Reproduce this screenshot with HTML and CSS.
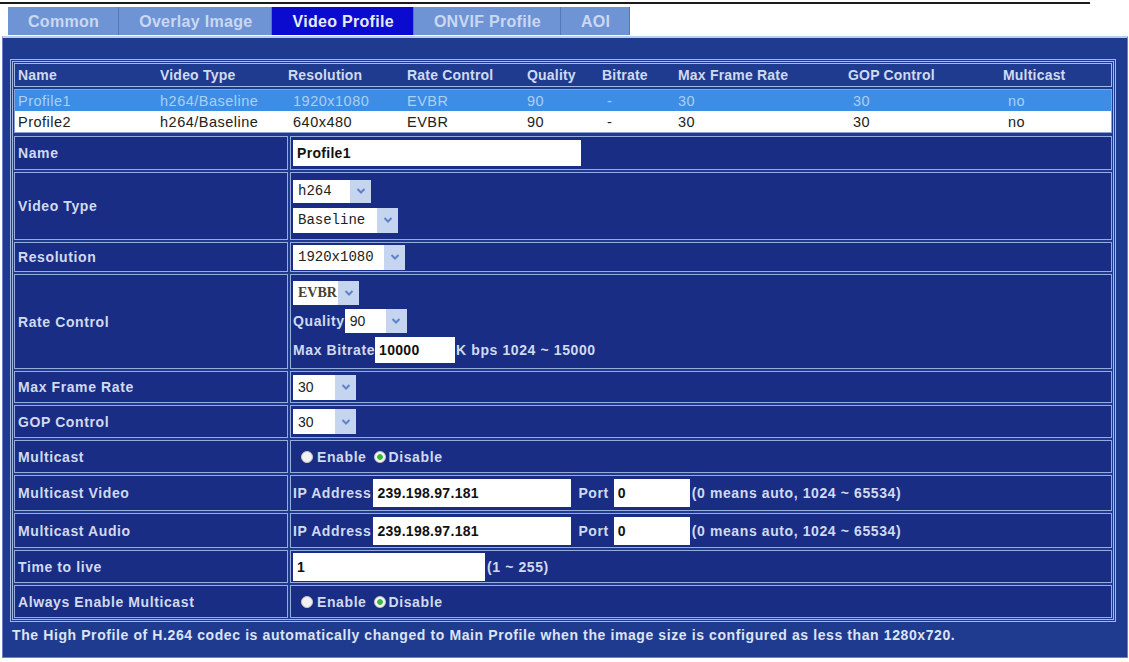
FILE: index.html
```html
<!DOCTYPE html>
<html lang="en">
<head>
<meta charset="utf-8">
<title>Video Profile</title>
<link rel="stylesheet" href="styles.css">
</head>
<body>
<div class="topline"></div>
<nav class="tabs">
  <a class="tab">Common</a>
  <a class="tab">Overlay Image</a>
  <a class="tab active">Video Profile</a>
  <a class="tab">ONVIF Profile</a>
  <a class="tab">AOI</a>
</nav>

<main class="panel">
  <div class="frame">
    <div class="head cols">
      <span>Name</span><span>Video Type</span><span>Resolution</span><span>Rate Control</span><span>Quality</span><span>Bitrate</span><span>Max Frame Rate</span><span>GOP Control</span><span>Multicast</span>
    </div>
    <div class="list">
      <div class="cols item selected">
        <span>Profile1</span><span>h264/Baseline</span><span class="d">1920x1080</span><span>EVBR</span><span>90</span><span class="d">-</span><span>30</span><span class="d">30</span><span class="d">no</span>
      </div>
      <div class="cols item">
        <span>Profile2</span><span>h264/Baseline</span><span class="d">640x480</span><span>EVBR</span><span>90</span><span class="d">-</span><span>30</span><span class="d">30</span><span class="d">no</span>
      </div>
    </div>

    <div class="form">
      <div class="label">Name</div>
      <div class="value"><input class="field f-name" type="text" value="Profile1"></div>

      <div class="label">Video Type</div>
      <div class="value stack">
        <span class="select s-h264"><span class="opt mono">h264</span><span class="drop"><svg viewBox="0 0 10 6"><path d="M1.5 1 L5 4.5 L8.5 1"/></svg></span></span>
        <span class="select s-base"><span class="opt mono">Baseline</span><span class="drop"><svg viewBox="0 0 10 6"><path d="M1.5 1 L5 4.5 L8.5 1"/></svg></span></span>
      </div>

      <div class="label">Resolution</div>
      <div class="value"><span class="select s-res"><span class="opt mono">1920x1080</span><span class="drop"><svg viewBox="0 0 10 6"><path d="M1.5 1 L5 4.5 L8.5 1"/></svg></span></span></div>

      <div class="label">Rate Control</div>
      <div class="value stack rate">
        <span class="select s-evbr"><span class="opt serif">EVBR</span><span class="drop"><svg viewBox="0 0 10 6"><path d="M1.5 1 L5 4.5 L8.5 1"/></svg></span></span>
        <span class="line">Quality<span class="select s-qual"><span class="opt">90</span><span class="drop"><svg viewBox="0 0 10 6"><path d="M1.5 1 L5 4.5 L8.5 1"/></svg></span></span></span>
        <span class="line">Max Bitrate<input class="field f-rate" type="text" value="10000">K bps 1024 ~ 15000</span>
      </div>

      <div class="label">Max Frame Rate</div>
      <div class="value"><span class="select s-num"><span class="opt">30</span><span class="drop"><svg viewBox="0 0 10 6"><path d="M1.5 1 L5 4.5 L8.5 1"/></svg></span></span></div>

      <div class="label">GOP Control</div>
      <div class="value"><span class="select s-num"><span class="opt">30</span><span class="drop"><svg viewBox="0 0 10 6"><path d="M1.5 1 L5 4.5 L8.5 1"/></svg></span></span></div>

      <div class="label">Multicast</div>
      <div class="value radios"><span class="radio"></span><span>Enable</span><span class="radio on"></span><span>Disable</span></div>

      <div class="label">Multicast Video</div>
      <div class="value">IP Address<input class="field f-ip" type="text" value="239.198.97.181"><span class="port">Port</span><input class="field f-port" type="text" value="0">(0 means auto, 1024 ~ 65534)</div>

      <div class="label">Multicast Audio</div>
      <div class="value">IP Address<input class="field f-ip" type="text" value="239.198.97.181"><span class="port">Port</span><input class="field f-port" type="text" value="0">(0 means auto, 1024 ~ 65534)</div>

      <div class="label">Time to live</div>
      <div class="value"><input class="field f-ttl" type="text" value="1">(1 ~ 255)</div>

      <div class="label">Always Enable Multicast</div>
      <div class="value radios"><span class="radio"></span><span>Enable</span><span class="radio on"></span><span>Disable</span></div>
    </div>
  </div>
  <p class="note">The High Profile of H.264 codec is automatically changed to Main Profile when the image size is configured as less than 1280x720.</p>
</main>
</body>
</html>
```

FILE: styles.css
```css
* { box-sizing: border-box; }

body {
  margin: 0;
  width: 1129px;
  height: 662px;
  overflow: hidden;
  background: #fff;
  font-family: "Liberation Sans", Arial, sans-serif;
}

/* thin rule across the top of the page */
.topline {
  width: 1090px;
  height: 2px;
  margin-top: 2px;
  background: #1b1b1b;
}

/* tab strip */
.tabs {
  display: flex;
  height: 28px;
  margin: 3px 0 0 8px;
}
.tab {
  display: flex;
  align-items: center;
  padding: 1px 19px 0 20px;
  background: #6f94d6;
  color: #cbd8f1;
  font-size: 16px;
  font-weight: bold;
  letter-spacing: 0.3px;
  border-right: 1px solid #5676b6;
}
.tab.active {
  background: #0b0bcf;
  color: #e6eaff;
}

/* blue settings panel */
.panel {
  margin: 1px 1px 0 2px;
  padding: 21px 0 14px 7px;
  background: #1f3b8f;
  border: 1px solid #6882c6;
  border-top: 2px solid #bccbec;
}
.frame {
  width: 1106px;
  padding: 1px;
  border: 3px double #a3b8e3;
}

/* profile list */
.cols {
  display: grid;
  grid-template-columns: 142px 128px 119px 120px 75px 76px 170px 155px 1fr;
  align-items: center;
  padding-left: 3px;
}
.head {
  height: 24px;
  border: 1px solid #a3b8e3;
  color: #d0daf0;
  font-size: 14px;
  font-weight: bold;
  letter-spacing: 0.2px;
}
.list {
  margin-top: 2px;
  background: #fff;
  border: 1px solid #8aa3d6;
}
.item {
  height: 21px;
  color: #222;
  font-size: 14.5px;
  letter-spacing: 0.5px;
}
.item .d { padding-left: 5px; }
.item.selected {
  background: #3d8de4;
  color: #a9d0f6;
}

/* settings form */
.form {
  display: grid;
  grid-template-columns: 274px 1fr;
  grid-template-rows: 34px 68px 30px 95px 32px 33px 33px 36px 35px 33px 33px;
  gap: 2px;
  margin-top: 3px;
}
.label,
.value {
  display: flex;
  align-items: center;
  background: #1a2d84;
  border: 1px solid #95acdc;
  color: #d0daf0;
  font-size: 14px;
  font-weight: bold;
  letter-spacing: 0.6px;
}
.label { padding-left: 3px; }
.value { padding-left: 2px; }

.stack {
  flex-direction: column;
  align-items: flex-start;
  justify-content: center;
  gap: 5px;
}
.rate { gap: 4px; }
.line {
  display: flex;
  align-items: center;
}

/* text fields */
.field {
  margin: 0;
  padding: 0 0 0 4px;
  border: 0;
  background: #fff;
  color: #111;
  font-family: "Liberation Sans", Arial, sans-serif;
  font-size: 14px;
  font-weight: bold;
  letter-spacing: 0.3px;
  outline: none;
}
.f-name { width: 288px; height: 26px; }
.f-rate { width: 80px; height: 26px; margin-right: 1px; }
.f-ip   { width: 198px; height: 28px; margin-left: 2px; }
.f-port { width: 76px; height: 28px; margin-right: 2px; }
.f-ttl  { width: 192px; height: 28px; margin-right: 2px; }
.port { margin: 0 5px 0 7px; }

/* drop-down boxes */
.select {
  display: inline-flex;
  align-items: stretch;
  height: 24px;
  background: #fff;
  color: #222;
  font-weight: normal;
  letter-spacing: 0;
}
.opt {
  flex: 1;
  display: flex;
  align-items: center;
  padding-left: 5px;
  font-size: 14px;
}
.mono { font-family: "Liberation Mono", "Courier New", monospace; font-size: 14px; }
.serif {
  font-family: "Liberation Serif", "Times New Roman", serif;
  font-size: 14px;
  font-weight: bold;
  color: #4a4030;
}
.drop {
  width: 21px;
  display: flex;
  align-items: center;
  justify-content: center;
  background: #c6d5ef;
}
.drop svg {
  width: 10px;
  height: 6px;
  fill: none;
  stroke: #5f82c9;
  stroke-width: 2;
}
.s-h264 { width: 78px; height: 23px; }
.s-base { width: 105px; height: 25px; }
.s-res  { width: 112px; height: 25px; }
.s-evbr { width: 66px; }
.s-qual { width: 62px; }
.s-num  { width: 63px; height: 25px; }

/* radio buttons */
.radios { padding-left: 10px; }
.radio {
  flex-shrink: 0;
  width: 12px;
  height: 12px;
  margin-right: 4px;
  border-radius: 50%;
  background: #f2f2f2;
  border: 1px solid #c9c9c9;
}
.radio.on {
  margin-left: 7px;
  margin-right: 3px;
  background: radial-gradient(circle, #39b839 0 2.5px, #f4f4f4 3.2px);
}

.note {
  margin: 5px 0 0 2px;
  line-height: 16px;
  color: #dde4f4;
  font-size: 14px;
  font-weight: bold;
  letter-spacing: 0.6px;
}
```
